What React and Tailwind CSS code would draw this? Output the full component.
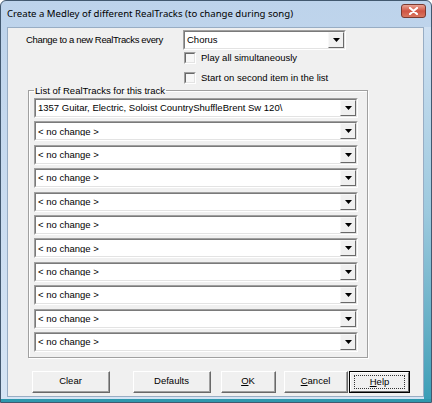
const tracks = [
  '1357 Guitar, Electric, Soloist CountryShuffleBrent Sw 120\\',
  '< no change >',
  '< no change >',
  '< no change >',
  '< no change >',
  '< no change >',
  '< no change >',
  '< no change >',
  '< no change >',
  '< no change >',
  '< no change >',
];

function Combo({ value, className }) {
  return (
    <div
      className={
        'flex h-[20px] border-t border-l border-t-[#a0a0a0] border-l-[#a0a0a0] border-b border-r border-b-white border-r-white ' +
        className
      }
    >
      <div className="flex flex-1 items-center border-t border-l border-t-[#7a7a7a] border-l-[#7a7a7a] border-b border-r border-b-[#e3e3e3] border-r-[#e3e3e3] bg-white">
        <span className="flex-1 truncate pl-[2px] leading-none">{value}</span>
        <div className="flex h-full w-[16px] items-center justify-center border-t border-l border-t-[#f8f8f8] border-l-[#f8f8f8] border-b border-r border-b-[#696969] border-r-[#696969] bg-[#f0f0f0]">
          <svg width="7" height="4" viewBox="0 0 7 4">
            <path d="M0 0h7L3.5 4z" fill="#000" />
          </svg>
        </div>
      </div>
    </div>
  );
}

function Check({ label }) {
  return (
    <div className="flex h-[16px] items-center">
      <div className="h-[12px] w-[12px] border-t border-l border-t-[#a0a0a0] border-l-[#a0a0a0] border-b border-r border-b-white border-r-white">
        <div className="h-full w-full border-t border-l border-t-[#696969] border-l-[#696969] border-b border-r border-b-[#e3e3e3] border-r-[#e3e3e3] bg-[#f7f7f7]" />
      </div>
      <span className="ml-[5px]">{label}</span>
    </div>
  );
}

function Btn({ children, className, isDefault }) {
  if (isDefault) {
    return (
      <div className={'h-[22px] border border-black ' + className}>
        <div className="flex h-full items-center justify-center border-t border-l border-t-white border-l-white border-b border-r border-b-[#696969] border-r-[#696969] bg-[#f0f0f0]">
          <div className="flex h-[14px] w-[calc(100%-6px)] items-center justify-center border border-dotted border-[#333]">
            {children}
          </div>
        </div>
      </div>
    );
  }
  return (
    <div className={'h-[22px] border-t border-l border-t-white border-l-white border-b border-r border-b-[#696969] border-r-[#696969] ' + className}>
      <div className="flex h-full items-center justify-center border-b border-r border-b-[#a0a0a0] border-r-[#a0a0a0] bg-[#f0f0f0]">
        {children}
      </div>
    </div>
  );
}

export default function App() {
  return (
    <div className="flex h-[403px] w-[432px] flex-col overflow-hidden rounded-t-[6px] border border-[#42586f] bg-gradient-to-b from-[#bdd3eb] to-[#d6e5f5] font-['Liberation_Sans',Arial,sans-serif] text-[9.5px] text-black">
      <div className="flex h-[26px] shrink-0 items-center justify-between pl-[6px] pr-[5px]">
        <span className="font-['Noto_Sans',sans-serif] text-[9.6px] text-black">
          Create a Medley of different RealTracks (to change during song)
        </span>
        <div className="flex h-[14px] w-[25px] -translate-y-[3px] items-center justify-center rounded-[3px] border border-[#7a3a30] bg-gradient-to-b from-[#e9a395] via-[#cf5443] to-[#d9765f]">
          <svg width="9" height="8" viewBox="0 0 9 8">
            <path d="M1 1l7 6M8 1L1 7" stroke="#fff" strokeWidth="2.2" strokeLinecap="round" />
          </svg>
        </div>
      </div>

      <div className="flex flex-1 border-b-[3px] border-b-[#2f98ad] pl-[6px]">
        <div className="mb-[2px] flex flex-1 flex-col border border-[#98adc4] bg-[#f0f0f0]">
          <div className="mt-[2px] flex items-center">
            <span className="w-[175px] shrink-0 whitespace-nowrap pl-[18px] tracking-[-0.35px]">
              Change to a new RealTracks every
            </span>
            <Combo value="Chorus" className="h-[19px] w-[163px]" />
          </div>
          <div className="ml-[176px] flex flex-col">
            <Check label="Play all simultaneously" />
            <div className="mt-[4px]">
              <Check label="Start on second item in the list" />
            </div>
          </div>

          <fieldset className="ml-[20px] mt-[-2px] w-[340px] border border-[#a0a0a0] pb-[5px] pl-[5px] pt-[1px] shadow-[inset_1px_1px_0_#fff,1px_1px_0_#fff]">
            <legend className="px-[1px] leading-[13px]">List of RealTracks for this track</legend>
            <div className="flex w-[324px] flex-col gap-[3.4px]">
              {tracks.map((t, i) => (
                <Combo key={i} value={t} />
              ))}
            </div>
          </fieldset>

          <div className="mt-[13px] flex items-start pl-[24px]">
            <Btn className="w-[78px]">Clear</Btn>
            <Btn className="ml-[23px] w-[78px]">Defaults</Btn>
            <Btn className="ml-[10px] w-[55px]">
              <span className="underline">O</span>K
            </Btn>
            <Btn className="ml-[8px] w-[64px]">
              <span className="underline">C</span>ancel
            </Btn>
            <Btn isDefault className="ml-[1px] w-[61px]">
              <span className="underline">H</span>elp
            </Btn>
          </div>
        </div>
        <div className="w-[7px] bg-gradient-to-b from-[#cfe0f2] via-[#9cc9de] to-[#3b9fb7]" />
      </div>
    </div>
  );
}
